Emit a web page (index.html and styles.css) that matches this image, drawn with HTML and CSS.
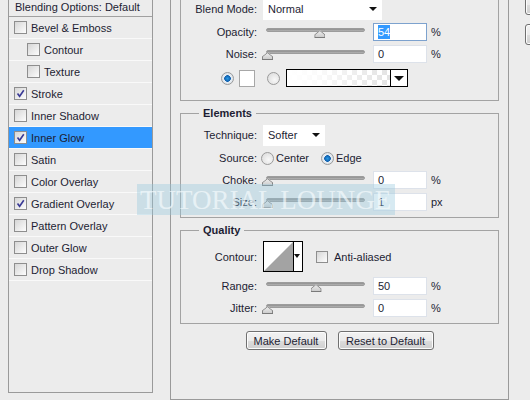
FILE: index.html
```html
<!DOCTYPE html>
<html lang="en">

<head>
  <meta charset="UTF-8">
  <meta name="viewport" content="width=device-width, initial-scale=1.0">
  <title>Layer Style - Inner Glow</title>
  <link rel="stylesheet" href="styles.css">
</head>

<body>
  <div class="dialog">
    <ul class="style-list">
      <li class="list-head">Blending Options: Default</li>
      <li><span class="box"></span>Bevel &amp; Emboss</li>
      <li class="sub"><span class="box"></span>Contour</li>
      <li class="sub"><span class="box"></span>Texture</li>
      <li><span class="box checked"><svg viewBox="0 0 11 11"><path d="M2.5 5.5 L4.6 8.3 L8.8 2.2"/></svg></span>Stroke</li>
      <li><span class="box"></span>Inner Shadow</li>
      <li class="active"><span class="box checked"><svg viewBox="0 0 11 11"><path d="M2.5 5.5 L4.6 8.3 L8.8 2.2"/></svg></span>Inner Glow</li>
      <li><span class="box"></span>Satin</li>
      <li><span class="box"></span>Color Overlay</li>
      <li><span class="box checked"><svg viewBox="0 0 11 11"><path d="M2.5 5.5 L4.6 8.3 L8.8 2.2"/></svg></span>Gradient Overlay</li>
      <li><span class="box"></span>Pattern Overlay</li>
      <li><span class="box"></span>Outer Glow</li>
      <li><span class="box"></span>Drop Shadow</li>
    </ul>

    <div class="panel">
      <fieldset class="group group-structure">
        <div class="row row-blend">
          <span class="lbl">Blend Mode:</span>
          <div class="select select-wide">Normal<span class="arrow"></span></div>
        </div>
        <div class="row">
          <span class="lbl">Opacity:</span>
          <div class="slider"><span class="thumb" style="left: 54%"></span></div>
          <div class="field"><span class="sel">54</span></div>
          <span class="unit">%</span>
        </div>
        <div class="row">
          <span class="lbl">Noise:</span>
          <div class="slider"><span class="thumb" style="left: 0%"></span></div>
          <div class="field">0</div>
          <span class="unit">%</span>
        </div>
        <div class="row row-color">
          <span class="radio on"></span>
          <span class="swatch"></span>
          <span class="radio"></span>
          <div class="gradient"><span class="gradient-fill"></span><span class="gradient-arrow"><span class="arrow"></span></span></div>
        </div>
      </fieldset>

      <fieldset class="group">
        <legend>Elements</legend>
        <div class="row row-tech">
          <span class="lbl">Technique:</span>
          <div class="select select-small">Softer<span class="arrow"></span></div>
        </div>
        <div class="row">
          <span class="lbl lbl-tight">Source:</span>
          <span class="radio"></span><span class="opt">Center</span>
          <span class="radio on"></span><span class="opt">Edge</span>
        </div>
        <div class="row">
          <span class="lbl">Choke:</span>
          <div class="slider"><span class="thumb" style="left: 0%"></span></div>
          <div class="field">0</div>
          <span class="unit">%</span>
        </div>
        <div class="row">
          <span class="lbl">Size:</span>
          <div class="slider"><span class="thumb" style="left: 0%"></span></div>
          <div class="field">1</div>
          <span class="unit">px</span>
        </div>
      </fieldset>

      <fieldset class="group">
        <legend>Quality</legend>
        <div class="row row-contour">
          <span class="lbl">Contour:</span>
          <div class="contour">
            <svg class="contour-preview" viewBox="0 0 30 30" preserveAspectRatio="none"><polygon points="0,30 30,0 30,30"/></svg>
            <span class="contour-arrow"><span class="arrow"></span></span>
          </div>
          <span class="box box-aa"></span><span class="opt">Anti-aliased</span>
        </div>
        <div class="row">
          <span class="lbl">Range:</span>
          <div class="slider"><span class="thumb" style="left: 50%"></span></div>
          <div class="field">50</div>
          <span class="unit">%</span>
        </div>
        <div class="row">
          <span class="lbl">Jitter:</span>
          <div class="slider"><span class="thumb" style="left: 0%"></span></div>
          <div class="field">0</div>
          <span class="unit">%</span>
        </div>
      </fieldset>

      <div class="buttons">
        <button class="btn btn-make">Make Default</button>
        <button class="btn btn-reset">Reset to Default</button>
      </div>
    </div>

    <div class="side-buttons">
      <button class="btn btn-side" aria-label="OK"></button>
      <button class="btn btn-side" aria-label="Cancel"></button>
    </div>
  </div>

  <div class="watermark">TUTORIAL LOUNGE</div>
</body>

</html>
```

FILE: styles.css
```css
body {
  font-family: 'Liberation Sans', Arial, sans-serif;
  font-size: 11px;
  color: #1d1d33;
  margin: 0;
  padding: 0;
  background-color: #ececec;
  width: 530px;
  height: 400px;
  overflow: hidden;
  position: relative;
}

.dialog {
  display: flex;
  align-items: flex-start;
  height: 400px;
  overflow: hidden;
}

/* styles list on the left */
.style-list {
  list-style: none;
  margin: -4px 0 0 8px;
  padding: 0;
  width: 145px;
  height: 397px;
  box-sizing: border-box;
  border: 1px solid #9a9a9a;
  flex-shrink: 0;
}

.style-list li {
  display: flex;
  align-items: center;
  height: 21px;
  padding-left: 5px;
  border-bottom: 1px solid #f9f9f9;
}

.style-list .list-head {
  height: 19px;
  padding-left: 6px;
  border-bottom-color: #a0a0a0;
}

.style-list .sub {
  padding-left: 18px;
}

.style-list .active {
  background-color: #3399ff;
}

.box {
  width: 11px;
  height: 11px;
  border: 1px solid #8e8e8e;
  background: linear-gradient(135deg, #d6d6d6, #fdfdfd);
  margin-right: 4px;
  flex-shrink: 0;
  display: flex;
}

.box svg {
  width: 11px;
  height: 11px;
}

.box path {
  fill: none;
  stroke: #3a3a96;
  stroke-width: 1.6;
}

/* main panel */
.panel {
  margin: -30px 0 0 17px;
  width: 339px;
  height: 430px;
  box-sizing: border-box;
  border: 1px solid #9a9a9a;
  padding: 0 9px;
  flex-shrink: 0;
}

.group {
  margin: 6px 0 0;
  padding: 0 0 4px;
  border: 1px solid #a3a3a3;
  min-width: 0;
}

.group legend {
  font-weight: bold;
  line-height: 13px;
  padding: 0 4px;
  margin-left: 18px;
}

.group-structure {
  margin-top: 0;
  padding-top: 25px;
  padding-bottom: 9px;
  border-top-color: transparent;
}

.row {
  display: flex;
  align-items: center;
  height: 22px;
}

.row-blend {
  height: 24px;
}

.row-color {
  height: 26px;
  padding-left: 40px;
}

.row-tech {
  height: 24px;
  margin-top: 3px;
}

.row-contour {
  height: 31px;
  margin: 4px 0 3px;
}

.lbl {
  width: 76px;
  margin-right: 6px;
  text-align: right;
  flex-shrink: 0;
}

.lbl-tight {
  margin-right: 4px;
}

.opt {
  margin: 0 12px 0 2px;
}

/* dropdowns */
.select {
  position: relative;
  background-color: #fff;
  height: 21px;
  line-height: 21px;
  padding-left: 5px;
  box-sizing: border-box;
}

.select-wide {
  width: 119px;
}

.select-small {
  width: 62px;
}

.arrow {
  position: absolute;
  right: 5px;
  top: 8px;
  width: 0;
  height: 0;
  border-left: 4px solid transparent;
  border-right: 4px solid transparent;
  border-top: 4px solid #111;
}

/* sliders */
.slider {
  position: relative;
  width: 99px;
  height: 4px;
  margin: 0 8px 0 3px;
  border-radius: 2px;
  background: linear-gradient(#8d8d8d, #b4b4b4);
  border: 1px solid #9c9c9c;
  box-sizing: border-box;
  transform: translateY(-2px);
}

.thumb {
  position: absolute;
  top: 1px;
  width: 11px;
  height: 8px;
  margin-left: -5px;
  background: linear-gradient(#f2f2f2, #c8c8c8);
  clip-path: polygon(50% 0, 100% 55%, 100% 100%, 0 100%, 0 55%);
}

.thumb::before {
  content: '';
  position: absolute;
  inset: 0;
  background: #7a7a7a;
  clip-path: polygon(50% 0, 100% 55%, 100% 100%, 0 100%, 0 55%, 8% 58%, 8% 88%, 92% 88%, 92% 58%, 50% 12%, 8% 58%, 0 55%);
}

.field {
  width: 54px;
  height: 18px;
  line-height: 16px;
  box-sizing: border-box;
  background-color: #fff;
  border: 1px solid #dde2ea;
  padding-left: 4px;
}

.field .sel {
  background-color: #3399ff;
  color: #fff;
  padding: 1px 0;
}

.row:nth-child(2) .field {
  border-color: #7da2ce;
}

.unit {
  margin-left: 4px;
}

/* radios and colour pickers */
.radio {
  width: 11px;
  height: 11px;
  border-radius: 50%;
  border: 1px solid #9a9a9a;
  background: radial-gradient(circle at 60% 60%, #f8f8f8, #d8d8d8);
  flex-shrink: 0;
}

.radio.on {
  background: radial-gradient(circle, #2a9be6 0, #0f5fae 3px, #e8eef4 3.6px, #cfd6dd 100%);
}

.row-color .radio.on {
  margin-right: 5px;
}

.swatch {
  width: 16px;
  height: 17px;
  box-sizing: border-box;
  border: 1px solid #a7a7a7;
  background-color: #fff;
  margin-right: 12px;
}

.row-color .radio + .radio,
.swatch + .radio {
  margin-right: 6px;
}

.gradient {
  display: flex;
  width: 122px;
  height: 18px;
  box-sizing: border-box;
  border: 1px solid #000;
}

.gradient-fill {
  flex: 1;
  background:
    linear-gradient(90deg, #fff 0%, rgba(255, 255, 255, 0.9) 30%, rgba(255, 255, 255, 0.4) 100%),
    repeating-conic-gradient(#d0d0d0 0 25%, #fff 0 50%) 0 0 / 10px 10px;
}

.gradient-arrow {
  position: relative;
  width: 16px;
  border-left: 1px solid #000;
  background-color: #fff;
}

.gradient-arrow .arrow {
  top: 6px;
  right: 3px;
  border-left-width: 5px;
  border-right-width: 5px;
  border-top-width: 5px;
}

/* contour picker */
.contour {
  display: flex;
  width: 40px;
  height: 31px;
  box-sizing: border-box;
  border: 1px solid #000;
  background-color: #fff;
  margin-right: 13px;
}

.contour-preview {
  width: 29px;
  height: 29px;
}

.contour-preview polygon {
  fill: #a3a3a3;
}

.contour-arrow {
  position: relative;
  flex: 1;
  border-left: 1px solid #000;
}

.contour-arrow .arrow {
  top: 12px;
  right: 2px;
  border-left-width: 3px;
  border-right-width: 3px;
}

.box-aa {
  width: 10px;
  height: 10px;
}

/* buttons */
.buttons {
  display: flex;
  justify-content: center;
  gap: 11px;
  margin-top: 7px;
}

.btn {
  font-family: inherit;
  font-size: 11px;
  color: #1d1d33;
  height: 19px;
  padding: 0;
  border: 1px solid #707070;
  border-radius: 3px;
  background: linear-gradient(#f2f2f2 0%, #ebebeb 50%, #dddddd 51%, #cfcfcf 100%);
  box-shadow: inset 0 0 0 1px #fcfcfc;
}

.btn-make {
  width: 81px;
}

.btn-reset {
  width: 96px;
}

.side-buttons {
  display: flex;
  flex-direction: column;
  gap: 9px;
  margin: -6px 0 0 16px;
  flex-shrink: 0;
}

.btn-side {
  width: 80px;
  height: 21px;
}

/* site watermark over the dialog */
.watermark {
  position: absolute;
  left: 137px;
  top: 184px;
  width: 258px;
  height: 31px;
  line-height: 33px;
  padding-left: 3px;
  box-sizing: border-box;
  background-color: rgba(150, 200, 222, 0.38);
  color: rgba(245, 250, 252, 0.7);
  font-family: 'Liberation Serif', 'Times New Roman', serif;
  font-size: 27px;
  white-space: nowrap;
  overflow: hidden;
}
```
